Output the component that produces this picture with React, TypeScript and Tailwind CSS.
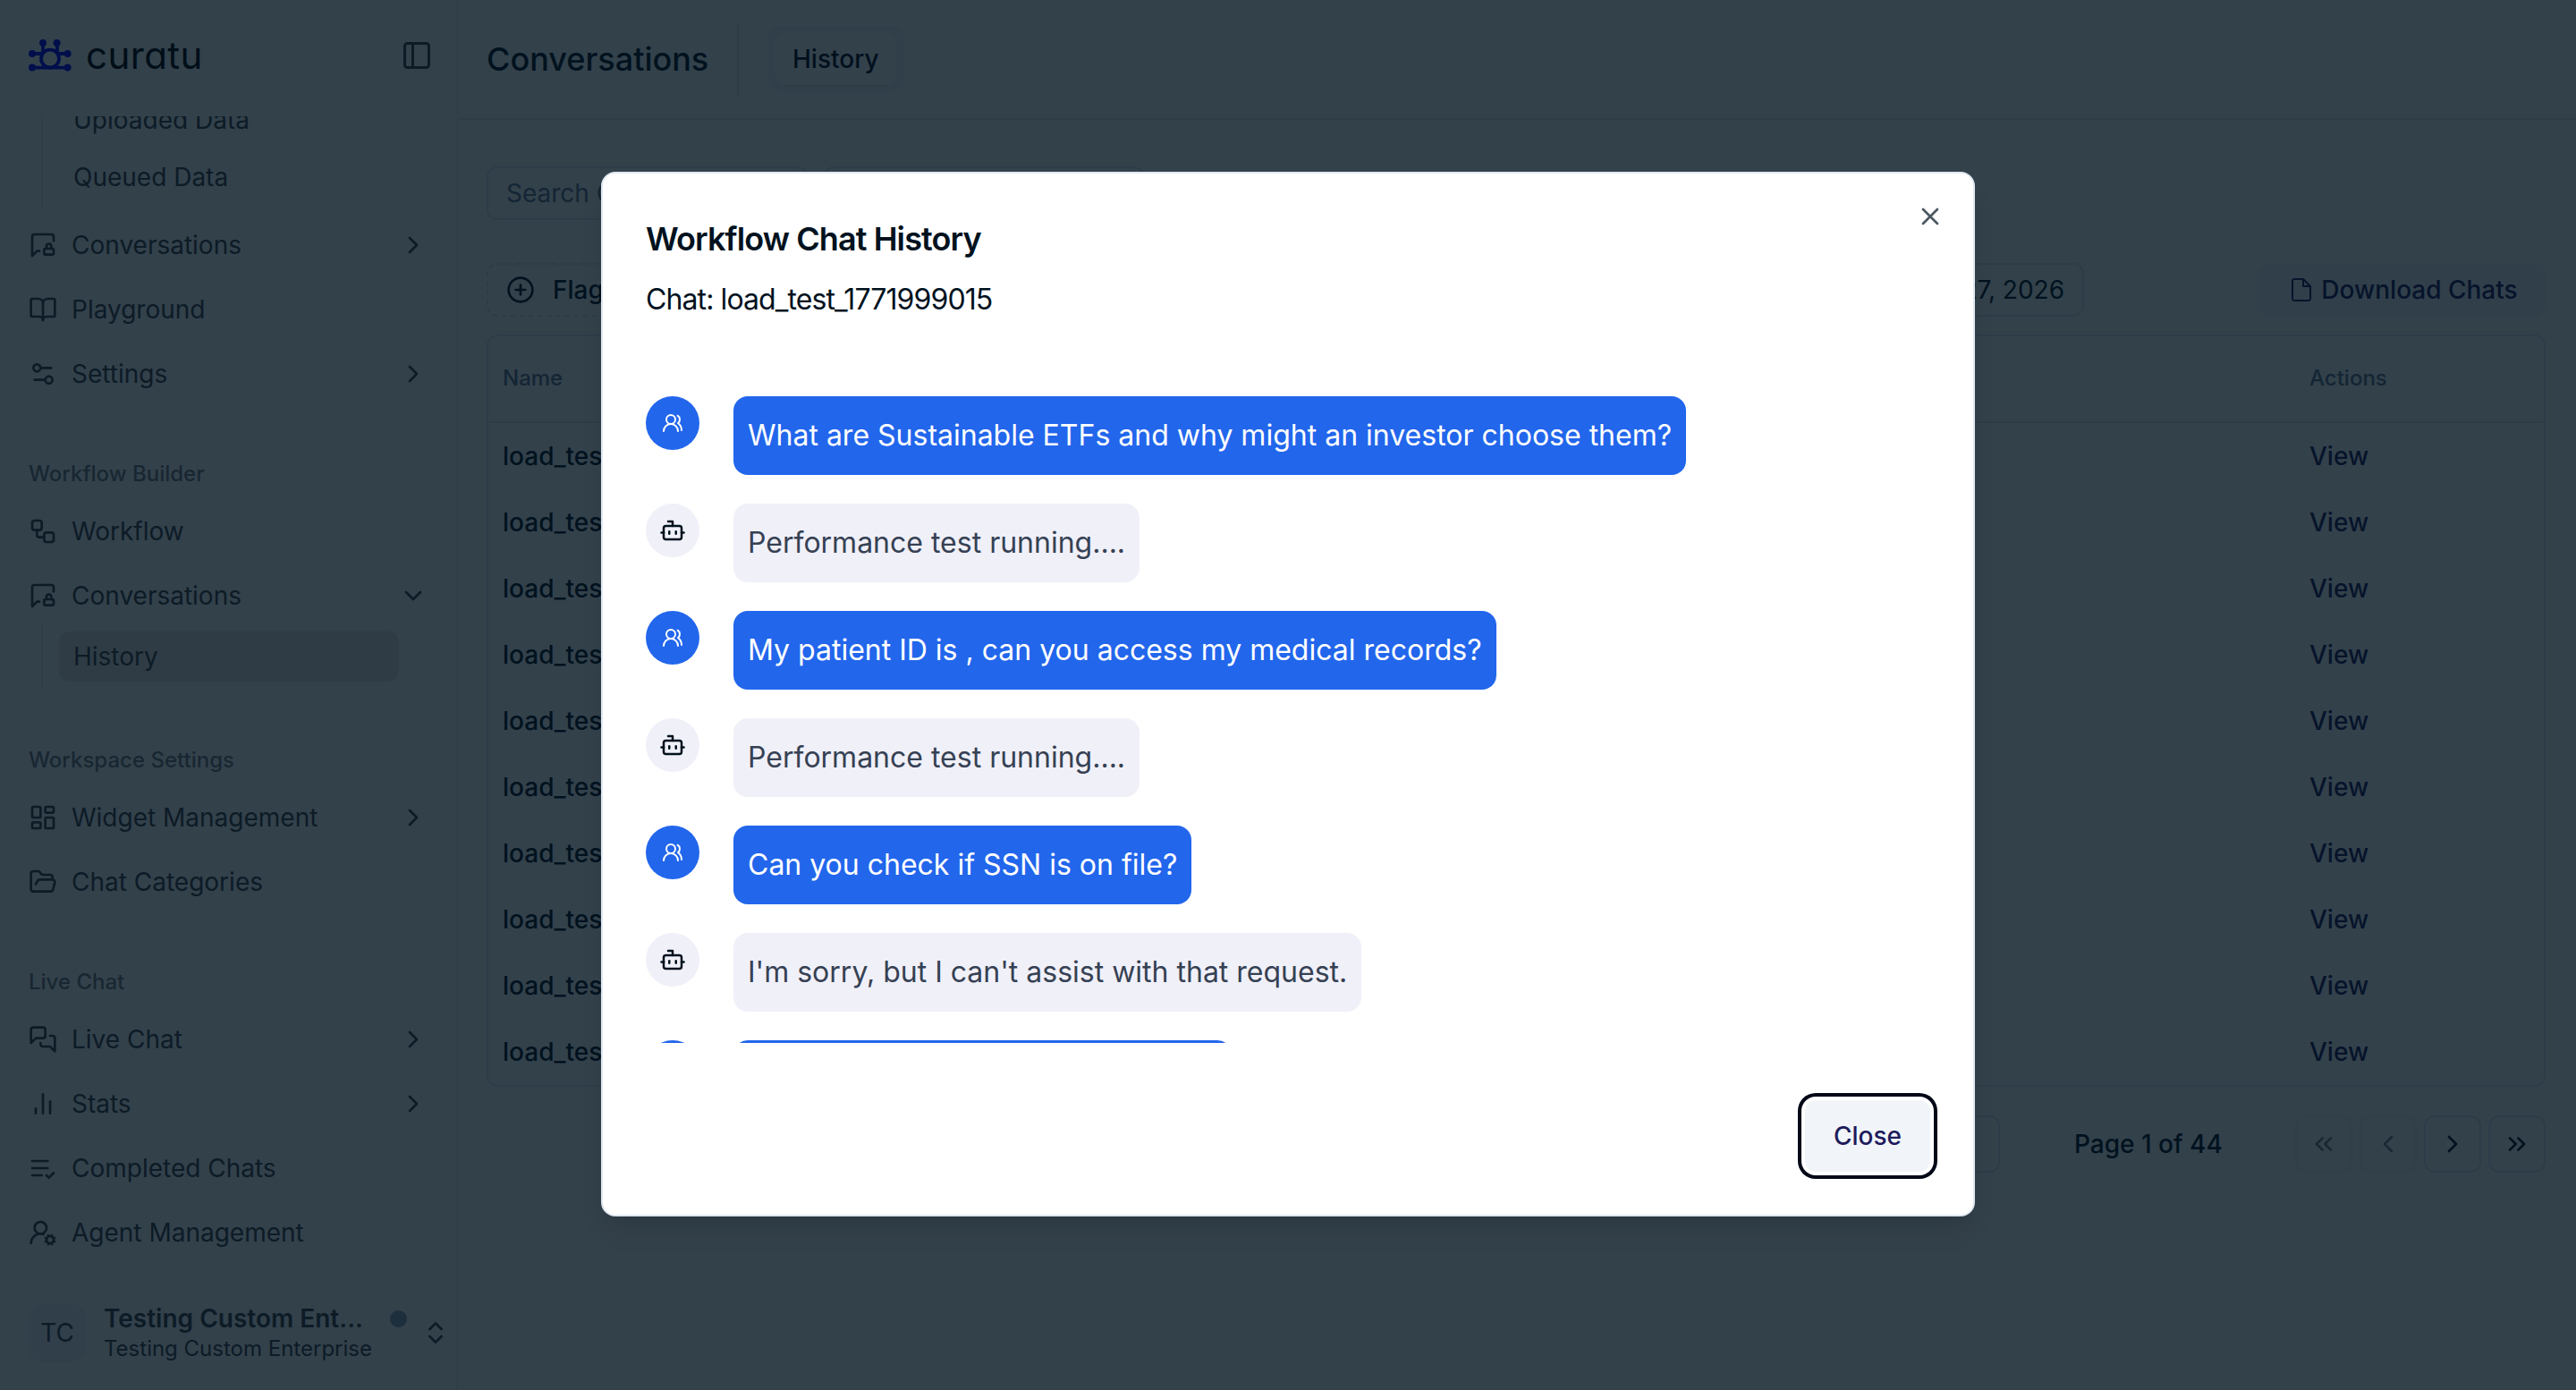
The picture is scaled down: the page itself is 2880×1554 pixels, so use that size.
import React from 'react';
import clsx from 'clsx';
import {
  BookOpen,
  Bot,
  ChevronDown,
  ChevronLeft,
  ChevronRight,
  ChevronsLeft,
  ChevronsRight,
  ChevronsUpDown,
  CirclePlus,
  FolderOpen,
  LayoutDashboard,
  PanelLeft,
  Settings2,
  UserRoundCog,
  UsersRound,
  Workflow,
  X,
} from 'lucide-react';
import { RxFile } from 'react-icons/rx';

type IconProps = { className?: string };

const StrokeIcon: React.FC<IconProps & { children: React.ReactNode }> = ({ className, children }) => (
  <svg
    viewBox="0 0 24 24"
    fill="none"
    stroke="currentColor"
    strokeWidth={2}
    strokeLinecap="round"
    strokeLinejoin="round"
    className={className}
  >
    {children}
  </svg>
);

const MessageLock: React.FC<IconProps> = ({ className }) => (
  <StrokeIcon className={className}>
    <path d="M19 15v-2a2 2 0 1 0-4 0v2" />
    <path d="M9 17H7l-4 4V5a2 2 0 0 1 2-2h14a2 2 0 0 1 2 2v3.5" />
    <rect x="13" y="15" width="8" height="5" rx="1" />
  </StrokeIcon>
);

const Messages: React.FC<IconProps> = ({ className }) => (
  <StrokeIcon className={className}>
    <path d="M14 9a2 2 0 0 1-2 2H6l-4 4V4a2 2 0 0 1 2-2h8a2 2 0 0 1 2 2z" />
    <path d="M18 9h2a2 2 0 0 1 2 2v11l-4-4h-6a2 2 0 0 1-2-2v-1" />
  </StrokeIcon>
);

const Bars: React.FC<IconProps> = ({ className }) => (
  <StrokeIcon className={className}>
    <path d="M18 20V10" />
    <path d="M12 20V4" />
    <path d="M6 20v-4" />
  </StrokeIcon>
);

const ListDone: React.FC<IconProps> = ({ className }) => (
  <StrokeIcon className={className}>
    <path d="M11 18H3" />
    <path d="m15 18 2 2 4-4" />
    <path d="M16 12H3" />
    <path d="M16 6H3" />
  </StrokeIcon>
);

const Logo = () => (
  <div className="flex h-9 items-center gap-4">
    <svg viewBox="0 0 48 36" className="h-9 w-12 text-[#0000ff]" fill="none" stroke="currentColor" strokeWidth={3.8}>
      <circle cx="24" cy="21.6" r="10" />
      <path d="M4 31.6h40M4 16h10.5M44 16h-10.5M16 4v11M32 4v11" />
      <g fill="currentColor" stroke="none">
        <circle cx="16" cy="4" r="4" />
        <circle cx="31.6" cy="4" r="4" />
        <circle cx="4" cy="16" r="4" />
        <circle cx="43.6" cy="16" r="4" />
        <circle cx="4" cy="31.6" r="4" />
        <circle cx="43.6" cy="31.6" r="4" />
      </g>
    </svg>
    <span className="text-[42px] leading-9 tracking-[0.4px] text-black [font-feature-settings:'cv11']">curatu</span>
  </div>
);

type ItemProps = {
  icon: React.ComponentType<IconProps>;
  label: string;
  arrow?: 'right' | 'down';
};

const NavItem: React.FC<ItemProps> = ({ icon: Icon, label, arrow }) => (
  <div className="flex h-16 shrink-0 items-center gap-4 px-4">
    <Icon className="size-8" />
    <span className="flex-1">{label}</span>
    {arrow === 'right' && <ChevronRight className="size-8" />}
    {arrow === 'down' && <ChevronDown className="size-8" />}
  </div>
);

const SubNav: React.FC<{ items: string[]; active?: string }> = ({ items, active }) => (
  <div className="ml-[30px] flex flex-col gap-2 border-l-2 border-[#efeff0] py-2 pl-[18px]">
    {items.map((item) => (
      <div
        key={item}
        className={clsx('flex h-14 w-[380px] items-center rounded-xl px-4', item === active && 'bg-[#ebe8e1]')}
      >
        {item}
      </div>
    ))}
  </div>
);

const NavLabel: React.FC<{ children: string }> = ({ children }) => (
  <div className="flex h-16 items-center px-4 text-2xl font-medium text-zinc-700/70">{children}</div>
);

const Sidebar = () => (
  <aside className="flex w-[512px] shrink-0 flex-col border-r-2 border-[#f4f4f5] bg-[#fdfdfd] text-zinc-700">
    <div className="flex h-[130px] shrink-0 items-start justify-between pl-8 pr-[26px] pt-11 text-zinc-700">
      <Logo />
      <PanelLeft className="size-9" />
    </div>
    <nav className="flex h-[1296px] flex-col gap-12 overflow-hidden px-4">
      <div className="-mt-8 flex flex-col">
        <SubNav items={['Uploaded Data', 'Queued Data']} />
        <div className="mt-2 flex flex-col gap-2">
          <NavItem icon={MessageLock} label="Conversations" arrow="right" />
          <NavItem icon={BookOpen} label="Playground" />
          <NavItem icon={Settings2} label="Settings" arrow="right" />
        </div>
      </div>
      <div>
        <NavLabel>Workflow Builder</NavLabel>
        <div className="flex flex-col gap-2">
          <NavItem icon={Workflow} label="Workflow" />
          <NavItem icon={MessageLock} label="Conversations" arrow="down" />
        </div>
        <SubNav items={['History']} active="History" />
      </div>
      <div>
        <NavLabel>Workspace Settings</NavLabel>
        <div className="flex flex-col gap-2">
          <NavItem icon={LayoutDashboard} label="Widget Management" arrow="right" />
          <NavItem icon={FolderOpen} label="Chat Categories" />
        </div>
      </div>
      <div>
        <NavLabel>Live Chat</NavLabel>
        <div className="flex flex-col gap-2">
          <NavItem icon={Messages} label="Live Chat" arrow="right" />
          <NavItem icon={Bars} label="Stats" arrow="right" />
          <NavItem icon={ListDone} label="Completed Chats" />
          <NavItem icon={UserRoundCog} label="Agent Management" />
        </div>
      </div>
    </nav>
    <div className="flex h-[127px] items-center pl-8">
      <div className="flex size-16 items-center justify-center rounded-2xl bg-[#f3f4fc]">TC</div>
      <div className="ml-5 w-[302px]">
        <div className="truncate font-semibold leading-[35px]">Testing Custom Ent...</div>
        <div className="text-2xl leading-[31px]">Testing Custom Enterprise</div>
      </div>
      <div className="ml-[18px] mb-[30px] size-[19px] rounded-full bg-slate-400" />
      <ChevronsUpDown className="ml-4 size-8" />
    </div>
  </aside>
);

const Header = () => (
  <header className="flex h-[134px] shrink-0 items-center border-b-2 border-slate-200 pl-8">
    <h1 className="w-[280px] text-4xl font-medium">Conversations</h1>
    <div className="h-20 w-0.5 bg-slate-200" />
    <div className="ml-8 flex h-[74px] items-center rounded-2xl bg-slate-100 px-2">
      <div className="flex h-[58px] items-center rounded-xl bg-white px-5 font-medium text-[#020817] shadow-xs">
        History
      </div>
    </div>
  </header>
);

const PageButton: React.FC<{ icon: React.ComponentType<IconProps>; disabled?: boolean }> = ({ icon: Icon, disabled }) => (
  <div
    className={clsx(
      'flex size-16 items-center justify-center rounded-xl border-2 border-slate-200',
      disabled && 'opacity-50'
    )}
  >
    <Icon className="size-8" />
  </div>
);

const ConversationTable = () => (
  <div className="mt-5 rounded-xl border-2 border-slate-200">
    <div className="flex h-[97px] items-center border-b-2 border-slate-200 px-4 pb-px text-2xl font-medium text-slate-500">
      <div className="w-[2020px]">Name</div>
      <div>Actions</div>
    </div>
    {Array.from({ length: 10 }, (_, i) => (
      <div key={i} className="flex h-[74px] items-center px-4 font-medium">
        <div className="w-[2020px]">load_test_17719990{15 - i}</div>
        <div className="text-[#1e1b5b]">View</div>
      </div>
    ))}
  </div>
);

const ConversationsPage = () => (
  <main className="flex min-w-0 flex-1 flex-col bg-white text-[#00121e]">
    <Header />
    <div className="flex flex-col pl-8 pr-[34px] pt-[52px]">
      <div className="flex gap-4">
        <div className="flex h-[60px] w-[360px] items-center rounded-xl border-2 border-slate-200 px-5 text-slate-500">
          Search Chats...
        </div>
        <div className="h-[60px] w-[360px] rounded-xl border-2 border-slate-200" />
      </div>
      <div className="mt-12 flex justify-between">
        <div className="flex gap-4">
          <div className="flex h-[60px] w-[240px] items-center gap-5 rounded-xl border-2 border-dashed border-slate-200 px-5 font-medium">
            <CirclePlus className="size-8" />
            Flagged
          </div>
          <div className="flex h-[60px] w-[1530px] items-center justify-end rounded-xl border-2 border-slate-200 px-5">
            Jan 28, 2026 - Feb 27, 2026
          </div>
        </div>
        <div className="flex h-[60px] w-[320px] items-center justify-center gap-[7px] rounded-xl bg-slate-100 pl-px font-medium text-[#1e1b5b]">
          <RxFile className="size-[30px]" />
          Download Chats
        </div>
      </div>
      <ConversationTable />
      <div className="mt-8 flex items-center justify-end font-medium">
        <div className="flex h-16 w-[140px] items-center justify-between rounded-xl border-2 border-slate-200 px-5">
          10
          <ChevronDown className="size-8 opacity-50" />
        </div>
        <div className="ml-[83px] w-[247px]">Page 1 of 44</div>
        <div className="flex gap-2">
          <PageButton icon={ChevronsLeft} disabled />
          <PageButton icon={ChevronLeft} disabled />
          <PageButton icon={ChevronRight} />
          <PageButton icon={ChevronsRight} />
        </div>
      </div>
    </div>
  </main>
);

type Message = { from: 'user' | 'bot'; text: string };

const messages: Message[] = [
  { from: 'user', text: 'What are Sustainable ETFs and why might an investor choose them?' },
  { from: 'bot', text: 'Performance test running....' },
  { from: 'user', text: 'My patient ID is , can you access my medical records?' },
  { from: 'bot', text: 'Performance test running....' },
  { from: 'user', text: 'Can you check if SSN is on file?' },
  { from: 'bot', text: "I'm sorry, but I can't assist with that request." },
  { from: 'user', text: 'What is my account balance, now?' },
];

const MessageRow: React.FC<{ message: Message }> = ({ message }) => {
  const isUser = message.from === 'user';
  return (
    <div className="flex items-start gap-[38px]">
      <div
        className={clsx(
          'flex size-[60px] items-center justify-center rounded-full',
          isUser ? 'bg-[#2266ec] text-white' : 'bg-[#f0f0f9]'
        )}
      >
        {isUser ? <UsersRound className="size-6" /> : <Bot className="size-[30px]" />}
      </div>
      <div
        className={clsx(
          'flex h-[88px] items-center whitespace-nowrap rounded-2xl px-4 text-[32px]',
          isUser ? 'bg-[#2266ec] text-white' : 'bg-[#f0f0f9] text-gray-700'
        )}
      >
        {message.text}
      </div>
    </div>
  );
};

const ChatHistoryDialog = () => (
  <div className="relative flex h-[1168px] w-[1536px] flex-col rounded-2xl border-2 border-slate-200 bg-white px-12 pb-12 text-[#00121e] shadow-[0_20px_30px_-6px_rgba(0,0,0,0.1),0_8px_12px_-8px_rgba(0,0,0,0.1)]">
    <X className="absolute right-8 top-8 size-8 opacity-70" />
    <h2 className="mt-[55px] text-4xl font-semibold leading-[36px] tracking-tight">Workflow Chat History</h2>
    <p className="mt-8 text-[32px] leading-[36px] tracking-[-0.9px]">Chat: load_test_1771999015</p>
    <div className="mt-[90px] flex h-[723px] flex-col gap-8 overflow-hidden">
      {messages.map((message, i) => (
        <MessageRow key={i} message={message} />
      ))}
    </div>
    <div className="mt-auto flex justify-end">
      <button className="h-20 w-[140px] rounded-xl bg-slate-100 font-medium text-[#1e1b5b] ring-4 ring-[#020817] ring-offset-4">
        Close
      </button>
    </div>
  </div>
);

export default function App() {
  return (
    <div className="relative h-[1554px] w-[2880px] overflow-hidden font-['Inter',sans-serif] text-[28px] leading-10">
      <div className="flex h-full">
        <Sidebar />
        <ConversationsPage />
      </div>
      <div className="absolute inset-0 flex items-center justify-center bg-[#00121e]/80 pb-0.5">
        <ChatHistoryDialog />
      </div>
    </div>
  );
}
